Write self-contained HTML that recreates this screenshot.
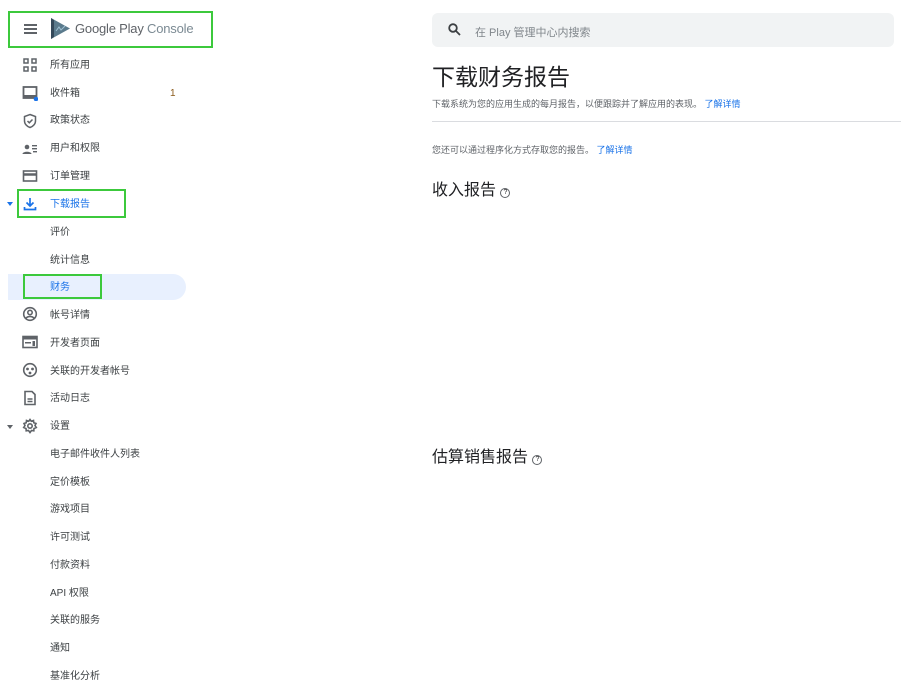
<!DOCTYPE html>
<html><head><meta charset="utf-8"><style>
*{margin:0;padding:0;box-sizing:border-box}
body{width:901px;height:690px;background:#fff;position:relative;overflow:hidden;font-family:"Liberation Sans","Noto Sans CJK SC",sans-serif;color:#3c4043}
.it{position:absolute;left:50px;font-size:10px;line-height:12px;color:#3c4043;white-space:nowrap;margin-top:1px}
.ic{position:absolute;left:22px;width:16px;height:16px}
.gb{position:absolute;border:2.5px solid #3cc93c}
a{color:#1a73e8;text-decoration:none}
</style></head><body>
<div class="gb" style="left:8px;top:11px;width:205px;height:37px"></div>
<div style="position:absolute;left:24px;top:24px;width:13px;height:1.6px;background:#5f6368;box-shadow:0 4px 0 #5f6368,0 8px 0 #5f6368"></div>
<svg style="position:absolute;left:50px;top:18px" width="20" height="21" viewBox="0 0 20 21"><path d="M1 0 L20 10.5 L1 21 Z" fill="#5a7a8c"/><path d="M1 0 L1 21 L4 19 L4 2Z" fill="#34495a"/><path d="M6 13 L9 9 L11 12 L15 8" stroke="#9fc1d4" stroke-width="1" fill="none"/></svg>
<div style="position:absolute;left:75px;top:21px;font-size:13px;color:#5f6368;letter-spacing:-0.2px">Google Play <span style="color:#7b8a93">Console</span></div>

<svg class="ic" style="top:57px" viewBox="0 0 16 16" fill="none" stroke="#5f6368" stroke-width="1.5"><rect x="2" y="2" width="4" height="4"/><rect x="10" y="2" width="4" height="4"/><rect x="2" y="10" width="4" height="4"/><rect x="10" y="10" width="4" height="4"/></svg>
<div class="it" style="top:59px">所有应用</div>
<svg class="ic" style="top:85px" viewBox="0 0 16 16"><rect x="1.5" y="2" width="13" height="11" fill="none" stroke="#5f6368" stroke-width="1.8"/><rect x="1.5" y="10" width="13" height="3" fill="#5f6368"/><circle cx="14" cy="14" r="2.3" fill="#1a73e8"/></svg>
<div class="it" style="top:87px">收件箱</div>
<div class="it" style="top:87px;left:170px;color:#8a5a1a">1</div>
<svg class="ic" style="top:113px" viewBox="0 0 16 16" fill="none" stroke="#5f6368" stroke-width="1.5"><path d="M8 1.5 L13.5 3.5 V8 C13.5 11 11 13.5 8 14.5 C5 13.5 2.5 11 2.5 8 V3.5Z"/><path d="M5.5 8 L7.3 9.8 L10.5 6.5"/></svg>
<div class="it" style="top:114px">政策状态</div>
<svg class="ic" style="top:141px" viewBox="0 0 16 16" fill="#5f6368"><circle cx="5" cy="6" r="2.3"/><path d="M0.5 13 C0.5 10 9.5 10 9.5 13Z"/><rect x="10" y="4" width="5" height="1.4"/><rect x="10" y="7" width="5" height="1.4"/><rect x="11" y="10" width="4" height="1.4"/></svg>
<div class="it" style="top:142px">用户和权限</div>
<svg class="ic" style="top:168px" viewBox="0 0 16 16" fill="none" stroke="#5f6368" stroke-width="1.6"><rect x="1.5" y="3" width="13" height="10"/><path d="M1.5 6.5 H14.5" stroke-width="2.5"/></svg>
<div class="it" style="top:170px">订单管理</div>

<div style="position:absolute;left:7px;top:202px;border-left:3px solid transparent;border-right:3px solid transparent;border-top:4px solid #1a73e8"></div>
<div class="gb" style="left:17px;top:189px;width:109px;height:29px"></div>
<svg class="ic" style="top:196px" viewBox="0 0 16 16" fill="none" stroke="#1a73e8" stroke-width="1.7"><path d="M8 2 V10 M4.5 6.5 L8 10 L11.5 6.5 M2.5 11 V13.5 H13.5 V11"/></svg>
<div class="it" style="top:198px;color:#1a73e8">下载报告</div>
<div class="it" style="top:226px">评价</div>
<div class="it" style="top:254px">统计信息</div>
<div style="position:absolute;left:8px;top:274px;width:178px;height:26px;background:#e8f0fe;border-radius:0 13px 13px 0"></div>
<div class="gb" style="left:23px;top:274px;width:79px;height:25px"></div>
<div class="it" style="top:281px;color:#1a73e8">财务</div>

<svg class="ic" style="top:306px" viewBox="0 0 16 16" fill="none" stroke="#5f6368" stroke-width="1.6"><circle cx="8" cy="8" r="6.3"/><circle cx="8" cy="6.5" r="2.2"/><path d="M4 12 C6 10 10 10 12 12"/></svg>
<div class="it" style="top:309px">帐号详情</div>
<svg class="ic" style="top:334px" viewBox="0 0 16 16"><rect x="1" y="2.5" width="14" height="11" fill="none" stroke="#5f6368" stroke-width="1.6"/><rect x="1" y="2.5" width="14" height="3" fill="#5f6368"/><rect x="3" y="8" width="6" height="1.5" fill="#5f6368"/><rect x="10.5" y="7" width="2.5" height="5" fill="#5f6368"/></svg>
<div class="it" style="top:337px">开发者页面</div>
<svg class="ic" style="top:362px" viewBox="0 0 16 16"><circle cx="8" cy="8" r="6.3" fill="none" stroke="#5f6368" stroke-width="1.6"/><circle cx="5.5" cy="7" r="1.4" fill="#5f6368"/><circle cx="10.5" cy="7" r="1.4" fill="#5f6368"/><circle cx="8" cy="11" r="1.4" fill="#5f6368"/></svg>
<div class="it" style="top:365px">关联的开发者帐号</div>
<svg class="ic" style="top:390px" viewBox="0 0 16 16" fill="none" stroke="#5f6368" stroke-width="1.6"><path d="M3 1.5 H10 L13 4.5 V14.5 H3Z"/><path d="M5.5 9 H10.5 M5.5 11.5 H10.5"/></svg>
<div class="it" style="top:392px">活动日志</div>
<div style="position:absolute;left:7px;top:425px;border-left:3px solid transparent;border-right:3px solid transparent;border-top:4px solid #5f6368"></div>
<svg class="ic" style="top:418px" viewBox="0 0 16 16" fill="none" stroke="#5f6368" stroke-width="1.6"><circle cx="8" cy="8" r="2.2"/><path d="M8 1.5 L9.3 3.3 L11.5 2.5 L11.8 4.8 L14 5.5 L13 7.5 L14.3 9.5 L12 10.5 L11.8 12.8 L9.5 12.5 L8 14.5 L6.5 12.5 L4.2 12.8 L4 10.5 L1.7 9.5 L3 7.5 L2 5.5 L4.2 4.8 L4.5 2.5 L6.7 3.3Z"/></svg>
<div class="it" style="top:420px">设置</div>
<div class="it" style="top:448px">电子邮件收件人列表</div>
<div class="it" style="top:476px">定价模板</div>
<div class="it" style="top:503px">游戏项目</div>
<div class="it" style="top:531px">许可测试</div>
<div class="it" style="top:559px">付款资料</div>
<div class="it" style="top:587px">API 权限</div>
<div class="it" style="top:614px">关联的服务</div>
<div class="it" style="top:642px">通知</div>
<div class="it" style="top:670px">基准化分析</div>

<div style="position:absolute;left:432px;top:13px;width:462px;height:34px;background:#f1f3f4;border-radius:6px"></div>
<svg style="position:absolute;left:448px;top:23px" width="13" height="13" viewBox="0 0 13 13" fill="none" stroke="#3c4043" stroke-width="1.8"><circle cx="5" cy="5" r="3.8"/><path d="M8 8 L12 12"/></svg>
<div style="position:absolute;left:475px;top:24px;font-size:11px;color:#80868b">在 Play 管理中心内搜索</div>

<div style="position:absolute;left:432px;top:63px;font-size:23px;color:#202124;line-height:28px">下载财务报告</div>
<div style="position:absolute;left:432px;top:97px;font-size:9px;color:#5f6368">下载系统为您的应用生成的每月报告，以便跟踪并了解应用的表现。 <a>了解详情</a></div>
<div style="position:absolute;left:432px;top:121px;width:469px;height:1px;background:#dadce0"></div>
<div style="position:absolute;left:432px;top:143px;font-size:9px;color:#5f6368">您还可以通过程序化方式存取您的报告。 <a>了解详情</a></div>
<div style="position:absolute;left:432px;top:176px;font-size:16px;color:#202124">收入报告 <span style="display:inline-block;width:10px;height:10px;border:1.3px solid #5f6368;border-radius:50%;font-size:7px;line-height:8px;text-align:center;vertical-align:1px">?</span></div>
<div style="position:absolute;left:432px;top:443px;font-size:16px;color:#202124">估算销售报告 <span style="display:inline-block;width:10px;height:10px;border:1.3px solid #5f6368;border-radius:50%;font-size:7px;line-height:8px;text-align:center;vertical-align:1px">?</span></div>
</body></html>
